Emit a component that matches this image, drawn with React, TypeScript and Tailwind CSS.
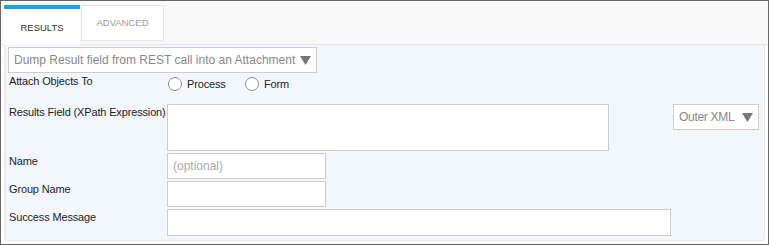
import React from "react";

function Caret() {
  return (
    <svg width="11" height="9" viewBox="0 0 11 9" className="shrink-0">
      <path d="M0 0 L11 0 L5.5 9 Z" fill="#777" />
    </svg>
  );
}

function Radio({ label }: { label: string }) {
  return (
    <label className="flex items-center gap-[5px] text-[11px] tracking-[-0.15px] text-[#222]">
      <span className="inline-block h-[14px] w-[14px] rounded-full border border-[#8a8a8a] bg-white" />
      {label}
    </label>
  );
}

function Row({ label, children, className = "" }: { label: string; children: React.ReactNode; className?: string }) {
  return (
    <div className={`flex items-start ${className}`}>
      <div className="w-[162px] shrink-0 whitespace-nowrap pl-[4px] pt-[1px] text-[11px] leading-[14px] tracking-[-0.15px] text-[#222]">
        {label}
      </div>
      {children}
    </div>
  );
}

export default function App() {
  return (
    <div
      className="flex h-[245px] w-[769px] flex-col border border-[#666] bg-white"
      style={{ fontFamily: '"Liberation Sans", Arial, sans-serif' }}
    >
      <div className="flex h-[44px] items-end border-b border-[#e3e3e3] bg-[#f9f9f9] pl-[3px]">
        <div className="-mb-[1px] flex h-[40px] w-[76px] items-center justify-center border-t-[4px] border-[#1aa3e8] bg-white pt-[3px] text-[9.5px] text-[#333]">
          RESULTS
        </div>
        <div className="mb-[3px] ml-[1px] flex h-[36px] w-[83px] items-center justify-center border border-[#e6e6e6] bg-white pt-[1px] text-[9.5px] text-[#999]">
          ADVANCED
        </div>
      </div>

      <div className="mx-[3px] mb-[3px] flex-1 rounded-b-[4px] border-x border-b border-[#e6e6e6] bg-[#f2f7fe]">
        <div className="ml-[3px] mt-[2px] flex h-[26px] w-[309px] items-center justify-between border border-[#ccc] bg-white pl-[5px] pr-[5px] text-[12px] text-[#888]">
          <span className="whitespace-nowrap">Dump Result field from REST call into an Attachment</span>
          <Caret />
        </div>

        <Row label="Attach Objects To" className="h-[31px]">
          <div className="ml-[1px] mt-[3px] flex gap-[9px]">
            <div className="w-[68px]">
              <Radio label="Process" />
            </div>
            <Radio label="Form" />
          </div>
        </Row>

        <Row label="Results Field (XPath Expression)">
          <div className="h-[47px] w-[442px] border border-[#ccc] bg-white" />
          <div className="ml-[64px] flex h-[26px] w-[86px] items-center justify-between border border-[#ccc] bg-white pl-[5px] pr-[5px] text-[12px] tracking-[-0.3px] text-[#888]">
            <span className="whitespace-nowrap">Outer XML</span>
            <Caret />
          </div>
        </Row>

        <Row label="Name" className="mt-[2px]">
          <div className="flex h-[26px] w-[159px] items-center border border-[#ccc] bg-white pl-[5px] text-[12px] text-[#aaa]">
            (optional)
          </div>
        </Row>

        <Row label="Group Name" className="mt-[2px]">
          <div className="h-[26px] w-[159px] border border-[#ccc] bg-white" />
        </Row>

        <Row label="Success Message" className="mt-[2px]">
          <div className="h-[27px] w-[504px] border border-[#ccc] bg-white" />
        </Row>
      </div>
    </div>
  );
}
